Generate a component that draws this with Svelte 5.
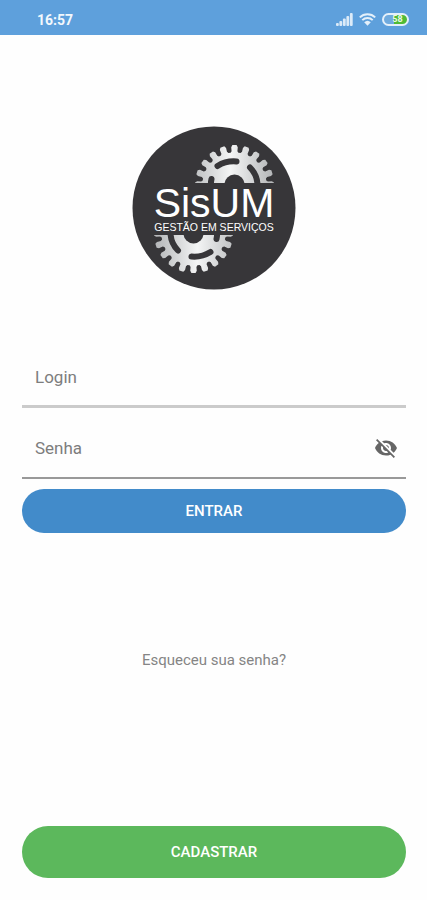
<script>
    let login = "";
    let password = "";
    let showPassword = false;

    // outline of the toothed wheel, centred on 0,0
    function gearPath(teeth, outer, root) {
        const step = 360 / teeth;
        const point = (radius, degrees) => {
            const angle = (degrees - 90) * Math.PI / 180;
            return `${(radius * Math.cos(angle)).toFixed(2)} ${(radius * Math.sin(angle)).toFixed(2)}`;
        };

        let points = [];
        for (let i = 0; i < teeth; i++) {
            const middle = i * step;
            points.push(point(root, middle - 7));
            points.push(point(root + 3, middle - 5));
            points.push(point(outer - 4, middle - 5));
            points.push(point(outer, middle - 3));
            points.push(point(outer, middle + 3));
            points.push(point(outer - 4, middle + 5));
            points.push(point(root + 3, middle + 5));
            points.push(point(root, middle + 7));
        }
        return "M" + points.join("L") + "Z";
    }

    const gear = gearPath(20, 79, 64);

    function toggle() {
        showPassword = !showPassword;
    }
</script>

<svelte:head>
    <title>SisUM</title>
</svelte:head>

<div class="page">
    <header>
        <span class="time">16:57</span>
        <div class="status">
            <svg width="17" height="13" viewBox="0 0 17 13" fill="#dcebf8" aria-hidden="true">
                <rect x="0" y="10" width="2.8" height="3" rx="1"/>
                <rect x="3.4" y="8" width="2.8" height="5" rx="1"/>
                <rect x="6.9" y="5.5" width="2.8" height="7.5" rx="1"/>
                <rect x="10.4" y="3" width="2.8" height="10" rx="1"/>
                <rect x="13.9" y="0" width="2.8" height="13" rx="1"/>
            </svg>
            <svg width="17" height="13" viewBox="0 0 17 13" fill="none" stroke="#e4f0fa" stroke-width="2" aria-hidden="true">
                <path d="M.8 4.4a11 11 0 0 1 15.4 0M3.3 7.1a7.5 7.5 0 0 1 10.4 0"/>
                <path d="M5.2 9.2a4.8 4.8 0 0 1 6.6 0L8.5 12.8Z" fill="#e4f0fa" stroke="none"/>
            </svg>
            <span class="battery">58</span>
        </div>
    </header>

    <main>
        <svg class="logo" viewBox="0 0 328 328" role="img" aria-label="SisUM Gestão em Serviços">
            <defs>
                <linearGradient id="steel" x1="0" y1="0" x2="1" y2="0">
                    <stop offset="0" stop-color="#bfc1c3"/>
                    <stop offset=".45" stop-color="#f4f5f5"/>
                    <stop offset="1" stop-color="#b2b4b6"/>
                </linearGradient>
                <clipPath id="half">
                    <rect x="-80" y="-80" width="160" height="77"/>
                </clipPath>
                <g id="gear" clip-path="url(#half)">
                    <path d={gear} fill="url(#steel)"/>
                    <circle r="20" fill="#373639"/>
                    <g fill="none" stroke="#373639" stroke-width="12" stroke-linecap="round">
                        <path d="M-34 -37A62 62 0 0 1 4 -46"/>
                        <path d="M31 -34A52 52 0 0 1 46 4"/>
                        <path d="M-47 4A48 48 0 0 1 -46 -11"/>
                    </g>
                </g>
            </defs>
            <circle cx="164" cy="164" r="163" fill="#373639"/>
            <use href="#gear" transform="translate(205 117)"/>
            <use href="#gear" transform="translate(123 215) rotate(180)"/>
            <text class="name" x="164" y="181">SisUM</text>
            <text class="tagline" x="164" y="210">GESTÃO EM SERVIÇOS</text>
        </svg>

        <form on:submit|preventDefault>
            <div class="field">
                <input type="text" placeholder="Login" aria-label="Login" bind:value={login}>
            </div>
            <div class="field password">
                {#if showPassword}
                    <input type="text" placeholder="Senha" aria-label="Senha" bind:value={password}>
                {:else}
                    <input type="password" placeholder="Senha" aria-label="Senha" bind:value={password}>
                {/if}
                <button type="button" class="eye" aria-label="Mostrar senha" on:click={toggle}>
                    <svg width="24" height="24" viewBox="0 0 24 24" fill="#666">
                        <path d="M12 7c2.76 0 5 2.24 5 5 0 .65-.13 1.26-.36 1.83l2.92 2.92c1.51-1.26 2.7-2.89 3.43-4.75-1.73-4.39-6-7.5-11-7.5-1.4 0-2.74.25-3.98.7l2.16 2.16C10.74 7.13 11.35 7 12 7zM2 4.27l2.28 2.28.46.46C3.08 8.3 1.78 10.02 1 12c1.73 4.39 6 7.5 11 7.5 1.55 0 3.03-.3 4.38-.84l.42.42L19.73 22 21 20.73 3.27 3 2 4.27zM7.53 9.8l1.55 1.55c-.05.21-.08.43-.08.65 0 1.66 1.34 3 3 3 .22 0 .44-.03.65-.08l1.55 1.55c-.67.33-1.41.53-2.2.53-2.76 0-5-2.24-5-5 0-.79.2-1.53.53-2.2zm4.31-.78l3.15 3.15.02-.16c0-1.66-1.34-3-3-3l-.17.01z"/>
                    </svg>
                </button>
            </div>
            <button type="submit" class="enter">ENTRAR</button>
        </form>

        <a href="#senha">Esqueceu sua senha?</a>

        <button type="button" class="register">CADASTRAR</button>
    </main>
</div>

<style>
    :global(body) {
        margin: 0;
        background: #fefefe;
    }

    .page {
        display: flex;
        flex-direction: column;
        min-height: 100vh;
        font-family: Roboto, "Liberation Sans", sans-serif;
    }

    header {
        display: flex;
        align-items: center;
        justify-content: space-between;
        box-sizing: border-box;
        height: 35px;
        padding: 4px 18px 0 37px;
        background: #5ea0dc;
        color: #f2f8fd;
    }

    .time {
        font-size: 14px;
        font-weight: 700;
    }

    .status {
        display: flex;
        align-items: center;
        gap: 6px;
    }

    .battery {
        box-sizing: border-box;
        width: 27px;
        height: 13px;
        padding-left: 4px;
        border: 2px solid #e4f0fa;
        border-radius: 7px;
        background: linear-gradient(90deg, #6faade 42%, #4fbb35 42%);
        color: #e9f8e4;
        font-size: 9px;
        font-weight: 700;
        line-height: 9px;
        text-align: center;
    }

    main {
        display: flex;
        flex: 1;
        flex-direction: column;
        align-items: center;
        padding: 91px 21px 22px 22px;
    }

    .logo {
        width: 164px;
        height: 164px;
    }

    .logo text {
        font-family: "Liberation Sans", Arial, sans-serif;
        fill: #fff;
        text-anchor: middle;
    }

    .logo .name {
        font-size: 82px;
    }

    .logo .tagline {
        font-size: 21px;
    }

    form {
        display: flex;
        flex-direction: column;
        width: 100%;
        margin-top: 58px;
    }

    .field {
        display: flex;
        align-items: center;
        box-sizing: border-box;
        height: 60px;
        padding: 0 8px 0 13px;
        border-bottom: 3px solid #cbcbcb;
    }

    .password {
        margin-top: 11px;
        border-bottom: 2px solid #999;
    }

    input {
        flex: 1;
        min-width: 0;
        padding: 0;
        border: 0;
        outline: 0;
        background: none;
        color: #333;
        font: 17px Roboto, "Liberation Sans", sans-serif;
    }

    input::placeholder {
        color: #7d7d7d;
        opacity: 1;
    }

    button {
        border: 0;
        padding: 0;
        color: #fff;
        font: 500 15px Roboto, "Liberation Sans", sans-serif;
        cursor: pointer;
    }

    .eye {
        display: flex;
        background: none;
    }

    .enter {
        height: 44px;
        margin-top: 10px;
        border-radius: 22px;
        background: #428bca;
    }

    a {
        margin-top: 117px;
        color: #858585;
        font-size: 15px;
        line-height: 20px;
        text-decoration: none;
    }

    .register {
        width: 100%;
        height: 52px;
        margin-top: auto;
        border-radius: 26px;
        background: #5cb85c;
    }
</style>
